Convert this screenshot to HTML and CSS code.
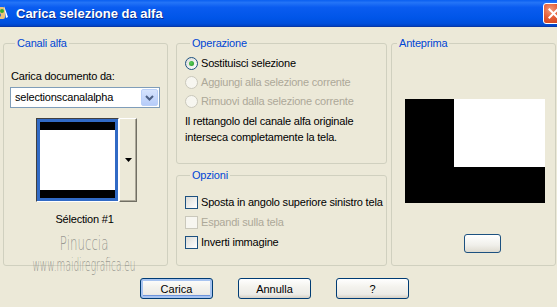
FILE: index.html
```html
<!DOCTYPE html>
<html lang="it">
<head>
    <meta charset="UTF-8">
    <title>Carica selezione da alfa</title>
    <link rel="stylesheet" href="styles.css">
</head>
<body>
    <div class="window">
        <div class="titlebar">
            <svg class="app-icon" width="14" height="16" viewBox="0 0 14 16">
                <rect x="0" y="2" width="10" height="12" rx="2" fill="#e9c27a"/>
                <circle cx="3" cy="5" r="2" fill="#d33"/>
                <circle cx="7" cy="6" r="2" fill="#3a3"/>
                <circle cx="4" cy="10" r="2" fill="#36c"/>
                <path d="M9 1 L13 12 L11 13 Z" fill="#fff"/>
            </svg>
            <span class="title">Carica selezione da alfa</span>
            <span class="close">
                <svg width="21" height="21" viewBox="0 0 21 21">
                    <path d="M6 6 L15 15 M15 6 L6 15" stroke="#fff" stroke-width="2.2" stroke-linecap="square"/>
                </svg>
            </span>
        </div>

        <div class="client">
            <div class="groups">
                <fieldset class="group group-channels">
                    <legend>Canali alfa</legend>
                    <div class="field-label">Carica documento da:</div>
                    <div class="combo">
                        <span class="combo-text">selectionscanalalpha</span>
                        <span class="combo-btn">
                            <svg width="9" height="6" viewBox="0 0 9 6">
                                <path d="M1 1 L4.5 4.5 L8 1" fill="none" stroke="#4d6185" stroke-width="2"/>
                            </svg>
                        </span>
                    </div>
                    <div class="thumb-picker">
                        <div class="thumb">
                            <div class="thumb-bar"></div>
                            <div class="thumb-white"></div>
                            <div class="thumb-bar"></div>
                        </div>
                        <div class="thumb-btn">
                            <svg width="7" height="4" viewBox="0 0 7 4"><path d="M0 0 H7 L3.5 4 Z" fill="#000"/></svg>
                        </div>
                    </div>
                    <div class="thumb-caption">Sélection #1</div>
                </fieldset>

                <div class="middle">
                    <fieldset class="group group-op">
                        <legend>Operazione</legend>
                        <div class="option">
                            <span class="radio checked"></span>
                            <span>Sostituisci selezione</span>
                        </div>
                        <div class="option disabled">
                            <span class="radio"></span>
                            <span>Aggiungi alla selezione corrente</span>
                        </div>
                        <div class="option disabled">
                            <span class="radio"></span>
                            <span>Rimuovi dalla selezione corrente</span>
                        </div>
                        <p class="note">Il rettangolo del canale alfa originale<br>interseca completamente la tela.</p>
                    </fieldset>

                    <fieldset class="group group-opt">
                        <legend>Opzioni</legend>
                        <div class="option check-row">
                            <span class="check"></span>
                            <span>Sposta in angolo superiore sinistro tela</span>
                        </div>
                        <div class="option check-row disabled">
                            <span class="check"></span>
                            <span>Espandi sulla tela</span>
                        </div>
                        <div class="option check-row">
                            <span class="check"></span>
                            <span>Inverti immagine</span>
                        </div>
                    </fieldset>
                </div>

                <fieldset class="group group-preview">
                    <legend>Anteprima</legend>
                    <div class="preview">
                        <div class="preview-white"></div>
                    </div>
                    <div class="preview-btn"></div>
                </fieldset>
            </div>

            <div class="buttons">
                <button class="btn btn-default">Carica</button>
                <button class="btn">Annulla</button>
                <button class="btn">?</button>
            </div>
        </div>

        <!-- watermark over the dialog -->
        <div class="watermark">
            <div class="wm-name">Pinuccia</div>
            <div class="wm-site">www.maidiregrafica.eu</div>
        </div>
    </div>
</body>
</html>
```

FILE: styles.css
```css
* {
    margin: 0;
    padding: 0;
    box-sizing: border-box;
}

body {
    font-family: "Liberation Sans", Arial, sans-serif;
    font-size: 11px;
    line-height: 13px;
    letter-spacing: -0.2px;
    color: #000;
    background: #ece9d8;
    width: 557px;
    height: 307px;
    overflow: hidden;
}

.window {
    position: relative;
    width: 557px;
    height: 307px;
    background: #ece9d8;
}

/* title bar */
.titlebar {
    height: 27px;
    display: flex;
    align-items: center;
    background: linear-gradient(to bottom, #0a5ff0 0%, #2474f7 10%, #0a5cf0 28%, #0055e8 70%, #004fdc 90%, #0042c4 100%);
    border-bottom: 1px solid #0838a8;
}

.app-icon {
    margin-left: -5px;
    margin-right: 7px;
    flex: none;
}

.title {
    font-size: 13px;
    font-weight: bold;
    letter-spacing: 0;
    color: #fff;
    text-shadow: 1px 1px 0 #0a2a8a;
    flex: 1;
}

.close {
    width: 21px;
    height: 21px;
    margin-right: -7px;
    flex: none;
    border: 1px solid #fff;
    border-radius: 3px;
    background: radial-gradient(circle at 35% 30%, #f29a7a 0%, #e45c35 45%, #c83a17 100%);
    display: flex;
    align-items: center;
    justify-content: center;
}

/* client area */
.client {
    padding: 10px 1px 0 3px;
}

.groups {
    display: flex;
    height: 229px;
}

.group {
    border: 1px solid #d0d0bf;
    border-radius: 3px;
    min-width: 0;
}

.group legend {
    color: #0046d5;
    margin-left: 5px;
    padding: 0 2px;
    line-height: 13px;
}

.group-channels {
    width: 165px;
    padding: 0 6px;
}

.middle {
    width: 211px;
    margin-left: 8px;
    display: flex;
    flex-direction: column;
    gap: 5px;
}

.group-preview {
    width: 165px;
    margin-left: 4px;
}

/* Canali alfa */
.field-label {
    margin-top: 20px;
    padding-left: 1px;
}

.combo {
    margin-top: 4px;
    height: 21px;
    width: 150px;
    border: 1px solid #7f9db9;
    background: #fff;
    display: flex;
    align-items: center;
}

.combo-text {
    flex: 1;
    padding-left: 4px;
}

.combo-btn {
    width: 17px;
    height: 17px;
    margin-right: 1px;
    border: 1px solid #bad0f8;
    border-radius: 2px;
    background: linear-gradient(to bottom, #d6e4fd, #b6ccf9);
    display: flex;
    align-items: center;
    justify-content: center;
}

.thumb-picker {
    margin: 10px 0 0 26px;
    display: flex;
    height: 84px;
}

.thumb {
    width: 83px;
    border: 1px solid;
    border-color: #404040 #fff #fff #404040;
    box-shadow: inset 0 0 0 3px #316ac5;
    padding: 3px;
    display: flex;
    flex-direction: column;
}

.thumb-bar {
    height: 8px;
    background: #000;
}

.thumb-white {
    flex: 1;
    background: #fff;
}

.thumb-btn {
    width: 18px;
    border: 1px solid;
    border-color: #fff #716f64 #716f64 #fff;
    box-shadow: inset -1px -1px 0 #aca899;
    background: #ece9d8;
    display: flex;
    align-items: center;
    justify-content: center;
}

.thumb-caption {
    margin-top: 11px;
    text-align: center;
    padding-right: 2px;
}

/* Operazione / Opzioni */
.group-op {
    height: 127px;
    padding: 4px 0 0 8px;
}

.group-opt {
    flex: 1;
    padding: 10px 0 0 8px;
}

.option {
    height: 19px;
    display: flex;
    align-items: center;
    gap: 3px;
    white-space: nowrap;
}

.check-row {
    height: 20px;
}

.option.disabled {
    color: #aca899;
}

.radio {
    flex: none;
    width: 13px;
    height: 13px;
    border-radius: 50%;
    border: 1px solid #1c5180;
    background: linear-gradient(135deg, #dcdcd7, #fff);
    display: flex;
    align-items: center;
    justify-content: center;
}

.radio.checked::after {
    content: "";
    width: 5px;
    height: 5px;
    border-radius: 50%;
    background: radial-gradient(circle at 40% 40%, #5cd05c, #219121);
}

.option.disabled .radio,
.option.disabled .check {
    border-color: #cac8bb;
    background: #f7f6f0;
}

.check {
    flex: none;
    width: 13px;
    height: 13px;
    border: 1px solid #1c5180;
    background: linear-gradient(135deg, #dcdcd7, #fff);
}

.note {
    margin-top: 2px;
    line-height: 16px;
}

/* Anteprima */
.preview {
    margin: 49px 0 0 13px;
    width: 140px;
    height: 104px;
    background: #000;
    display: flex;
    justify-content: flex-end;
    align-items: flex-start;
}

.preview-white {
    width: 91px;
    height: 68px;
    background: #fff;
}

.preview-btn {
    margin: 31px 0 0 72px;
    width: 37px;
    height: 19px;
    border: 1px solid #1c5180;
    border-radius: 3px;
    background: linear-gradient(to bottom, #fff, #f0efea 60%, #dedbd0);
}

/* bottom buttons */
.buttons {
    margin-top: 12px;
    display: flex;
    gap: 25px;
    padding-left: 137px;
}

.btn {
    font-family: "Liberation Sans", Arial, sans-serif;
    font-size: 11px;
    width: 73px;
    height: 21px;
    border: 1px solid #003c74;
    border-radius: 3px;
    background: linear-gradient(to bottom, #fff 0%, #f4f3ee 40%, #ecebe6 80%, #d6d0c5 100%);
    color: #000;
}

.btn-default {
    box-shadow: inset 0 0 0 2px #a8c4f0, inset 0 -1px 0 2px #6d94dc;
}

/* watermark */
.watermark {
    position: absolute;
    left: -66px;
    top: 232px;
    width: 300px;
    display: flex;
    flex-direction: column;
    align-items: center;
    color: rgba(105, 105, 105, 0.65);
    font-family: "DejaVu Sans", sans-serif;
    font-weight: 200;
    letter-spacing: 0;
    pointer-events: none;
}

.wm-name {
    font-size: 19px;
    line-height: 22px;
    transform: scaleX(0.62);
}

.wm-site {
    font-size: 18px;
    line-height: 22px;
    transform: scaleX(0.5);
    white-space: nowrap;
}
```
